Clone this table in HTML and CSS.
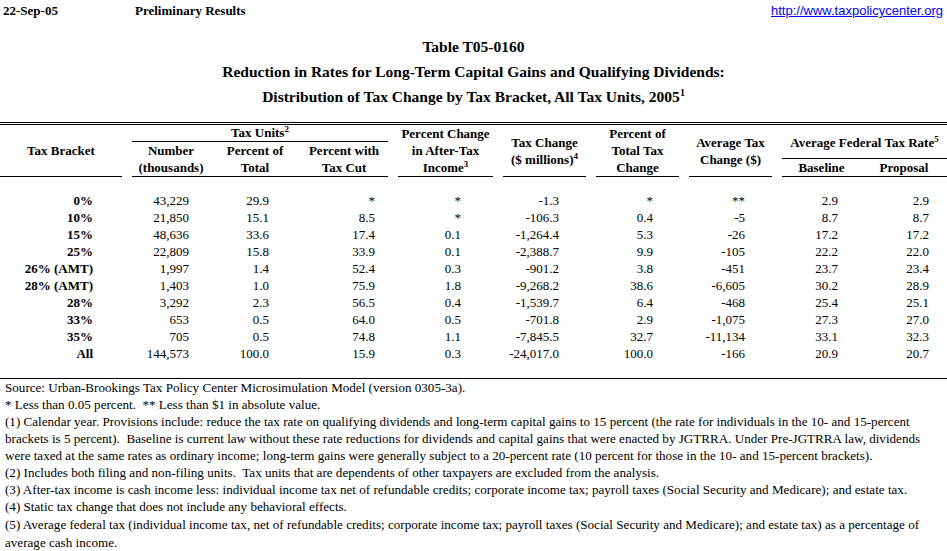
FILE: index.html
```html
<!DOCTYPE html>
<html>
<head>
<meta charset="utf-8">
<title>Table T05-0160</title>
<link rel="stylesheet" href="styles.css">
</head>
<body>
<div class="page">
  <div class="topbar">
    <span class="date">22-Sep-05</span>
    <span class="prelim">Preliminary Results</span>
    <a class="url" href="#">http://www.taxpolicycenter.org</a>
  </div>
  <div class="titles">
    <div class="title">Table T05-0160</div>
    <div class="title">Reduction in Rates for Long-Term Capital Gains and Qualifying Dividends:</div>
    <div class="title">Distribution of Tax Change by Tax Bracket, All Tax Units, 2005<sup class="tsup">1</sup></div>
  </div>
  <table class="data">
    <colgroup>
      <col class="w-bracket"><col class="w-gap10"><col class="w-num"><col class="w-pof"><col class="w-pwith">
      <col class="w-gap10"><col class="w-pchg"><col class="w-gap10"><col class="w-tchg"><col class="w-gap10">
      <col class="w-ptot"><col class="w-gap10"><col class="w-avg"><col class="w-gap10"><col class="w-base"><col class="w-prop">
    </colgroup>
    <thead>
      <tr>
        <th rowspan="3" class="ul">Tax Bracket</th>
        <th rowspan="3"></th>
        <th colspan="3" class="group">Tax Units<sup class="hsup">2</sup></th>
        <th rowspan="3"></th>
        <th rowspan="3" class="ul">Percent Change<br>in After-Tax<br>Income<sup class="hsup">3</sup></th>
        <th rowspan="3"></th>
        <th rowspan="3" class="ul">Tax Change<br>($ millions)<sup class="hsup">4</sup></th>
        <th rowspan="3"></th>
        <th rowspan="3" class="ul">Percent of<br>Total Tax<br>Change</th>
        <th rowspan="3"></th>
        <th rowspan="3" class="ul">Average Tax<br>Change ($)</th>
        <th rowspan="3"></th>
        <th colspan="2" rowspan="2" class="ul fedrate">Average Federal Tax Rate<sup class="hsup">5</sup></th>
      </tr>
      <tr>
        <th>Number</th>
        <th>Percent of</th>
        <th>Percent with</th>
      </tr>
      <tr>
        <th class="ul">(thousands)</th>
        <th class="ul">Total</th>
        <th class="ul">Tax Cut</th>
        <th class="ul">Baseline</th>
        <th class="ul">Proposal</th>
      </tr>
    </thead>
    <tbody>
      <tr class="spacer"><td colspan="16">&nbsp;</td></tr>
      <tr><td class="br">0%</td><td></td><td class="c-num">43,229</td><td class="c-pof">29.9</td><td class="c-pwith">*</td><td></td><td class="c-pchg">*</td><td></td><td class="c-tchg">-1.3</td><td></td><td class="c-ptot">*</td><td></td><td class="c-avg">**</td><td></td><td class="c-base">2.9</td><td class="c-prop">2.9</td></tr>
      <tr><td class="br">10%</td><td></td><td class="c-num">21,850</td><td class="c-pof">15.1</td><td class="c-pwith">8.5</td><td></td><td class="c-pchg">*</td><td></td><td class="c-tchg">-106.3</td><td></td><td class="c-ptot">0.4</td><td></td><td class="c-avg">-5</td><td></td><td class="c-base">8.7</td><td class="c-prop">8.7</td></tr>
      <tr><td class="br">15%</td><td></td><td class="c-num">48,636</td><td class="c-pof">33.6</td><td class="c-pwith">17.4</td><td></td><td class="c-pchg">0.1</td><td></td><td class="c-tchg">-1,264.4</td><td></td><td class="c-ptot">5.3</td><td></td><td class="c-avg">-26</td><td></td><td class="c-base">17.2</td><td class="c-prop">17.2</td></tr>
      <tr><td class="br">25%</td><td></td><td class="c-num">22,809</td><td class="c-pof">15.8</td><td class="c-pwith">33.9</td><td></td><td class="c-pchg">0.1</td><td></td><td class="c-tchg">-2,388.7</td><td></td><td class="c-ptot">9.9</td><td></td><td class="c-avg">-105</td><td></td><td class="c-base">22.2</td><td class="c-prop">22.0</td></tr>
      <tr><td class="br">26% (AMT)</td><td></td><td class="c-num">1,997</td><td class="c-pof">1.4</td><td class="c-pwith">52.4</td><td></td><td class="c-pchg">0.3</td><td></td><td class="c-tchg">-901.2</td><td></td><td class="c-ptot">3.8</td><td></td><td class="c-avg">-451</td><td></td><td class="c-base">23.7</td><td class="c-prop">23.4</td></tr>
      <tr><td class="br">28% (AMT)</td><td></td><td class="c-num">1,403</td><td class="c-pof">1.0</td><td class="c-pwith">75.9</td><td></td><td class="c-pchg">1.8</td><td></td><td class="c-tchg">-9,268.2</td><td></td><td class="c-ptot">38.6</td><td></td><td class="c-avg">-6,605</td><td></td><td class="c-base">30.2</td><td class="c-prop">28.9</td></tr>
      <tr><td class="br">28%</td><td></td><td class="c-num">3,292</td><td class="c-pof">2.3</td><td class="c-pwith">56.5</td><td></td><td class="c-pchg">0.4</td><td></td><td class="c-tchg">-1,539.7</td><td></td><td class="c-ptot">6.4</td><td></td><td class="c-avg">-468</td><td></td><td class="c-base">25.4</td><td class="c-prop">25.1</td></tr>
      <tr><td class="br">33%</td><td></td><td class="c-num">653</td><td class="c-pof">0.5</td><td class="c-pwith">64.0</td><td></td><td class="c-pchg">0.5</td><td></td><td class="c-tchg">-701.8</td><td></td><td class="c-ptot">2.9</td><td></td><td class="c-avg">-1,075</td><td></td><td class="c-base">27.3</td><td class="c-prop">27.0</td></tr>
      <tr><td class="br">35%</td><td></td><td class="c-num">705</td><td class="c-pof">0.5</td><td class="c-pwith">74.8</td><td></td><td class="c-pchg">1.1</td><td></td><td class="c-tchg">-7,845.5</td><td></td><td class="c-ptot">32.7</td><td></td><td class="c-avg">-11,134</td><td></td><td class="c-base">33.1</td><td class="c-prop">32.3</td></tr>
      <tr><td class="br">All</td><td></td><td class="c-num">144,573</td><td class="c-pof">100.0</td><td class="c-pwith">15.9</td><td></td><td class="c-pchg">0.3</td><td></td><td class="c-tchg">-24,017.0</td><td></td><td class="c-ptot">100.0</td><td></td><td class="c-avg">-166</td><td></td><td class="c-base">20.9</td><td class="c-prop">20.7</td></tr>
      <tr class="endrow"><td colspan="16">&nbsp;</td></tr>
    </tbody>
  </table>
  <div class="notes">
    <div class="note">Source: Urban-Brookings Tax Policy Center Microsimulation Model (version 0305-3a).</div>
    <div class="note">* Less than 0.05 percent.  ** Less than $1 in absolute value.</div>
    <div class="note">(1) Calendar year. Provisions include: reduce the tax rate on qualifying dividends and long-term capital gains to 15 percent (the rate for individuals in the 10- and 15-percent</div>
    <div class="note">brackets is 5 percent).  Baseline is current law without these rate reductions for dividends and capital gains that were enacted by JGTRRA. Under Pre-JGTRRA law, dividends</div>
    <div class="note">were taxed at the same rates as ordinary income; long-term gains were generally subject to a 20-percent rate (10 percent for those in the 10- and 15-percent brackets).</div>
    <div class="note">(2) Includes both filing and non-filing units.  Tax units that are dependents of other taxpayers are excluded from the analysis.</div>
    <div class="note">(3) After-tax income is cash income less: individual income tax net of refundable credits; corporate income tax; payroll taxes (Social Security and Medicare); and estate tax.</div>
    <div class="note">(4) Static tax change that does not include any behavioral effects.</div>
    <div class="note note-gap">(5) Average federal tax (individual income tax, net of refundable credits; corporate income tax; payroll taxes (Social Security and Medicare); and estate tax) as a percentage of</div>
    <div class="note note-gap">average cash income.</div>
  </div>
</div>
</body>
</html>
```
FILE: styles.css
```css
html, body {
  margin: 0;
  padding: 0;
  background: #ffffff;
  color: #000000;
  font-family: "Liberation Serif", "Times New Roman", serif;
}

.page {
  width: 947px;
  overflow: hidden;
}

/* top bar */
.topbar {
  display: flex;
  align-items: center;
  padding-top: 2px;
  height: 17px;
  font-size: 13px;
  line-height: 17px;
  font-weight: bold;
}
.date {
  width: 129px;
  padding-left: 3px;
}
.prelim {
  padding-left: 3px;
  flex: 1;
}
.url {
  font-family: "Liberation Sans", Arial, sans-serif;
  font-weight: normal;
  font-size: 13px;
  color: #0000ff;
  text-decoration: underline;
  padding-right: 4px;
}

/* titles */
.titles {
  margin-top: 15px;
  text-align: center;
}
.title {
  font-size: 15.5px;
  line-height: 25px;
  font-weight: bold;
}
.tsup {
  font-size: 10px;
  line-height: 0;
  vertical-align: 6px;
}

/* table */
.data {
  margin-top: 13px;
  width: 947px;
  table-layout: fixed;
  border-collapse: separate;
  border-spacing: 0;
  border-top: 3px double #000000;
}
.data th, .data td {
  padding: 0;
  font-size: 13px;
  line-height: 17px;
  white-space: nowrap;
  overflow: visible;
}
.data th {
  font-weight: bold;
  text-align: center;
  vertical-align: middle;
}
.data th.group {
  line-height: 16px;
  border-bottom: 1px solid #000000;
}
.data th.ul {
  border-bottom: 1px solid #000000;
}
.data th.fedrate {
  padding-top: 2px;
}
.hsup {
  font-size: 9px;
  line-height: 0;
  vertical-align: 5px;
}

.w-bracket { width: 122px; }
.w-gap10 { width: 10px; }
.w-num { width: 78px; }
.w-pof { width: 90px; }
.w-pwith { width: 88px; }
.w-pchg { width: 95px; }
.w-tchg { width: 83px; }
.w-ptot { width: 83px; }
.w-avg { width: 83px; }
.w-base { width: 79px; }
.w-prop { width: 86px; }

.spacer td {
  line-height: 15px;
}
.endrow td {
  line-height: 16px;
  border-bottom: 1px solid #000000;
}

.data td {
  text-align: right;
}
.data td.br {
  font-weight: bold;
  padding-right: 29px;
}
.c-num { padding-right: 21px !important; }
.c-pof { padding-right: 31px !important; }
.c-pwith { padding-right: 13px !important; }
.c-pchg { padding-right: 32px !important; }
.c-tchg { padding-right: 27px !important; }
.c-ptot { padding-right: 26px !important; }
.c-avg { padding-right: 27px !important; }
.c-base { padding-right: 23px !important; }
.c-prop { padding-right: 18px !important; }

/* notes */
.notes {
  padding-left: 5px;
}
.note {
  font-size: 13.1px;
  line-height: 17px;
  white-space: pre;
}
.note-gap {
  margin-top: 1px;
}
```
